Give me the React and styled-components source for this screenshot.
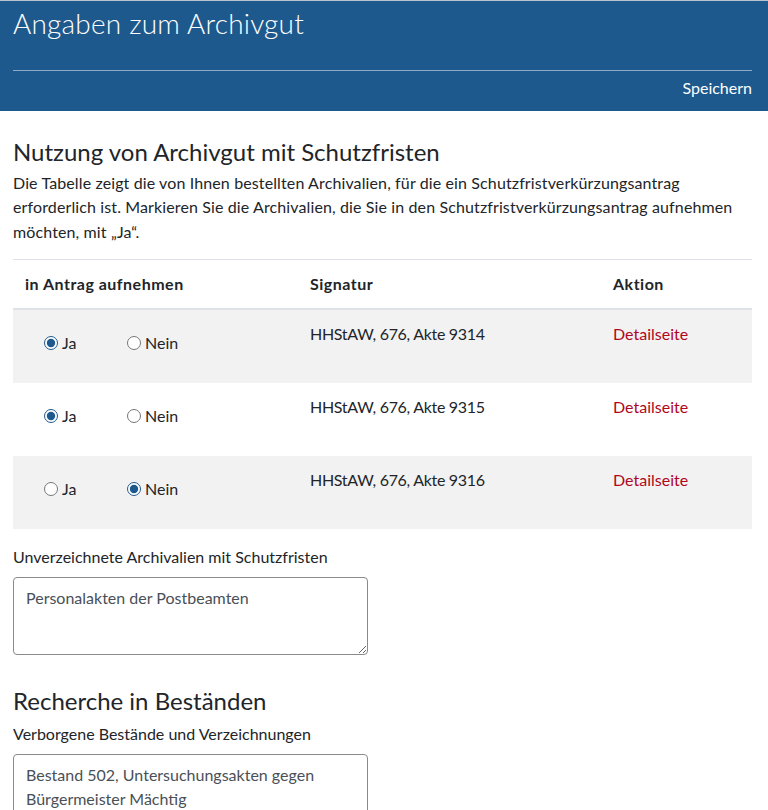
import React, { useState } from 'react';
import styled, { createGlobalStyle } from 'styled-components';

const GlobalStyle = createGlobalStyle`
  html, body {
    margin: 0;
    padding: 0;
    background: #fff;
  }
  body {
    font-family: "Segoe UI", Lato, "Liberation Sans", sans-serif;
    font-size: 16px;
    line-height: 1.5;
    color: #212529;
  }
  * { box-sizing: border-box; }
`;

const rows = [
  { id: 1, signatur: 'HHStAW, 676, Akte 9314', value: 'ja' },
  { id: 2, signatur: 'HHStAW, 676, Akte 9315', value: 'ja' },
  { id: 3, signatur: 'HHStAW, 676, Akte 9316', value: 'nein' },
];

const App = () => {
  const [choices, setChoices] = useState(
    rows.reduce((acc, r) => ({ ...acc, [r.id]: r.value }), {})
  );

  const pick = (id, value) => setChoices({ ...choices, [id]: value });

  return (
    <>
      <GlobalStyle />
      <Header>
        <Title>Angaben zum Archivgut</Title>
        <HeaderBar>
          <SaveLink href="#">Speichern</SaveLink>
        </HeaderBar>
      </Header>

      <Main>
        <SectionTitle>Nutzung von Archivgut mit Schutzfristen</SectionTitle>
        <Intro>
          Die Tabelle zeigt die von Ihnen bestellten Archivalien, für die ein
          Schutzfristverkürzungsantrag erforderlich ist. Markieren Sie die
          Archivalien, die Sie in den Schutzfristverkürzungsantrag aufnehmen
          möchten, mit „Ja“.
        </Intro>

        <Table>
          <thead>
            <tr>
              <Th width={285}>in Antrag aufnehmen</Th>
              <Th width={303}>Signatur</Th>
              <Th>Aktion</Th>
            </tr>
          </thead>
          <tbody>
            {rows.map((r, i) => (
              <Row key={r.id} $striped={i % 2 === 0}>
                <Td>
                  <RadioGroup>
                    <RadioLabel>
                      <Radio
                        type="radio"
                        name={`row-${r.id}`}
                        checked={choices[r.id] === 'ja'}
                        onChange={() => pick(r.id, 'ja')}
                      />
                      Ja
                    </RadioLabel>
                    <RadioLabel>
                      <Radio
                        type="radio"
                        name={`row-${r.id}`}
                        checked={choices[r.id] === 'nein'}
                        onChange={() => pick(r.id, 'nein')}
                      />
                      Nein
                    </RadioLabel>
                  </RadioGroup>
                </Td>
                <Td>
                  <Signatur>{r.signatur}</Signatur>
                </Td>
                <Td>
                  <DetailLink href="#">Detailseite</DetailLink>
                </Td>
              </Row>
            ))}
          </tbody>
        </Table>

        <Field>
          <Label>Unverzeichnete Archivalien mit Schutzfristen</Label>
          <TextArea defaultValue="Personalakten der Postbeamten" rows={2} />
        </Field>

        <SectionTitle $spaced>Recherche in Beständen</SectionTitle>
        <Field>
          <Label>Verborgene Bestände und Verzeichnungen</Label>
          <TextArea
            defaultValue={'Bestand 502, Untersuchungsakten gegen Bürgermeister Mächtig'}
            rows={3}
          />
        </Field>
      </Main>
    </>
  );
};

export default App;

const Header = styled.header`
  background: #1e598d;
  border-top: 1px solid #b9c4cf;
  height: 111px;
  padding: 0 16px 0 13px;
  color: #fff;
`;

const Title = styled.h1`
  margin: 0;
  height: 69px;
  padding-top: 2px;
  font-size: 28px;
  font-weight: 300;
  line-height: 40px;
  letter-spacing: 0.2px;
`;

const HeaderBar = styled.div`
  border-top: 1px solid #8eaacb;
  display: flex;
  justify-content: flex-end;
  padding-top: 7px;
`;

const SaveLink = styled.a`
  color: #fff;
  text-decoration: none;
  font-size: 16px;
  line-height: 20px;
`;

const Main = styled.main`
  padding: 27px 16px 0 13px;
`;

const SectionTitle = styled.h2`
  margin: ${(p) => (p.$spaced ? '32px' : '0')} 0 ${(p) => (p.$spaced ? '6px' : '4px')};
  font-size: 24px;
  font-weight: 400;
  line-height: 1.2;
`;

const Intro = styled.p`
  margin: 0 0 15px;
  line-height: 24.5px;
  letter-spacing: 0.12px;
`;

const Table = styled.table`
  width: 100%;
  border-collapse: collapse;
  margin-bottom: 16px;
`;

const Th = styled.th`
  width: ${(p) => (p.width ? `${p.width}px` : 'auto')};
  text-align: left;
  font-weight: 700;
  letter-spacing: 0.5px;
  padding: 12px;
  border-top: 1px solid #dee2e6;
  border-bottom: 2px solid #dee2e6;
  vertical-align: bottom;
`;

const Row = styled.tr`
  background: ${(p) => (p.$striped ? '#f2f2f2' : '#fff')};
  & + & td {
    border-top: 1px solid #dee2e6;
  }
`;

const Td = styled.td`
  padding: 12px;
  vertical-align: top;
`;

const Signatur = styled.span`
  letter-spacing: -0.3px;
`;

const RadioGroup = styled.div`
  display: flex;
  padding: 9px 0 16px 19px;
`;

const RadioLabel = styled.label`
  display: flex;
  align-items: center;
  width: 83px;
  cursor: pointer;
`;

const Radio = styled.input`
  accent-color: #1e598d;
  width: 14px;
  height: 14px;
  margin: 0 4px 0 0;
`;

const DetailLink = styled.a`
  color: #b0071d;
  text-decoration: none;
`;

const Field = styled.div`
  margin-bottom: 16px;
`;

const Label = styled.label`
  display: block;
  font-size: 16px;
  margin-bottom: 8px;
`;

const TextArea = styled.textarea`
  display: block;
  width: 355px;
  padding: 8px 12px;
  font-family: inherit;
  font-size: 16px;
  line-height: 24px;
  color: #495057;
  border: 1px solid #8a8a8a;
  border-radius: 4px;
  background: #fff;
  min-height: 78px;
`;
